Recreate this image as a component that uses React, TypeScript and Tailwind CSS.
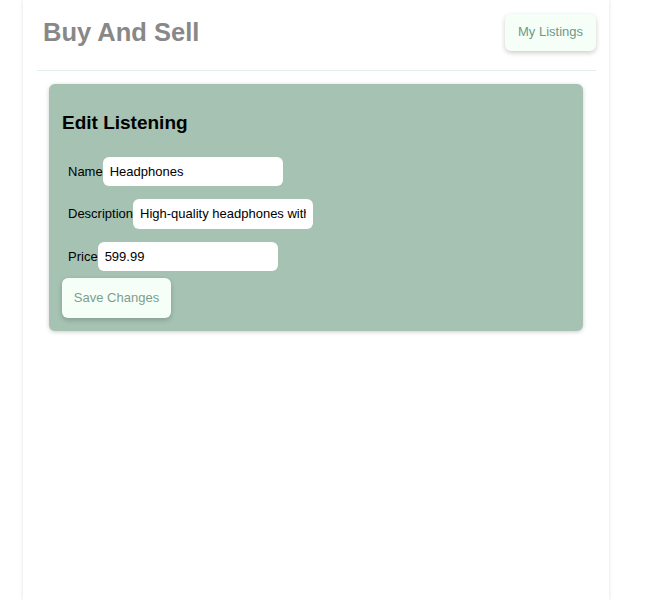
import React from 'react';

export default function App() {
  return (
    <div className="min-h-[600px] bg-white font-['Liberation_Sans',Arial,sans-serif]">
      <div className="ml-[23px] w-[586px] min-h-[600px] bg-white shadow-[0_0_4px_rgba(0,0,0,0.12)]">
        {/* Header */}
        <div className="ml-[14px] mr-[13px] flex items-center justify-between border-b border-[#e3eeee] pt-[13px] pb-[19px]">
          <h1 className="ml-[6px] text-[25.5px] font-bold text-[#888888]">Buy And Sell</h1>
          <button className="h-[37px] px-[13px] rounded-md bg-[#f5fff7] text-[13px] text-[#6f9888] shadow-[0_2px_5px_rgba(0,0,0,0.2)]">
            My Listings
          </button>
        </div>

        {/* Edit card */}
        <div className="ml-[26px] mr-[26px] mt-[13px] rounded-md bg-[#a5c2b2] px-[13px] pt-[25px] pb-[13px] shadow-[0_1px_4px_rgba(0,0,0,0.2)]">
          <h2 className="text-[19px] font-bold text-black">Edit Listening</h2>
          <form className="mt-[19px] text-[13px] text-black">
            <div className="flex items-center pl-[6px]">
              <label htmlFor="name">Name</label>
              <input id="name" defaultValue="Headphones" className="h-[29px] w-[180px] rounded-md bg-white px-[7px] text-[13px] outline-none" />
            </div>
            <div className="mt-[13px] flex items-center pl-[6px]">
              <label htmlFor="description">Description</label>
              <input id="description" defaultValue="High-quality headphones with noise cancellation" className="h-[30px] w-[180px] rounded-md bg-white px-[7px] text-[13px] outline-none" />
            </div>
            <div className="mt-[13px] flex items-center pl-[6px]">
              <label htmlFor="price">Price</label>
              <input id="price" defaultValue="599.99" className="h-[29px] w-[180px] rounded-md bg-white px-[7px] text-[13px] outline-none" />
            </div>
            <button type="button" className="mt-[7px] h-[40px] w-[109px] rounded-md bg-[#f5fff7] text-[13px] text-[#7f9d90] shadow-[0_2px_5px_rgba(0,0,0,0.2)]">
              Save Changes
            </button>
          </form>
        </div>
      </div>
    </div>
  );
}
